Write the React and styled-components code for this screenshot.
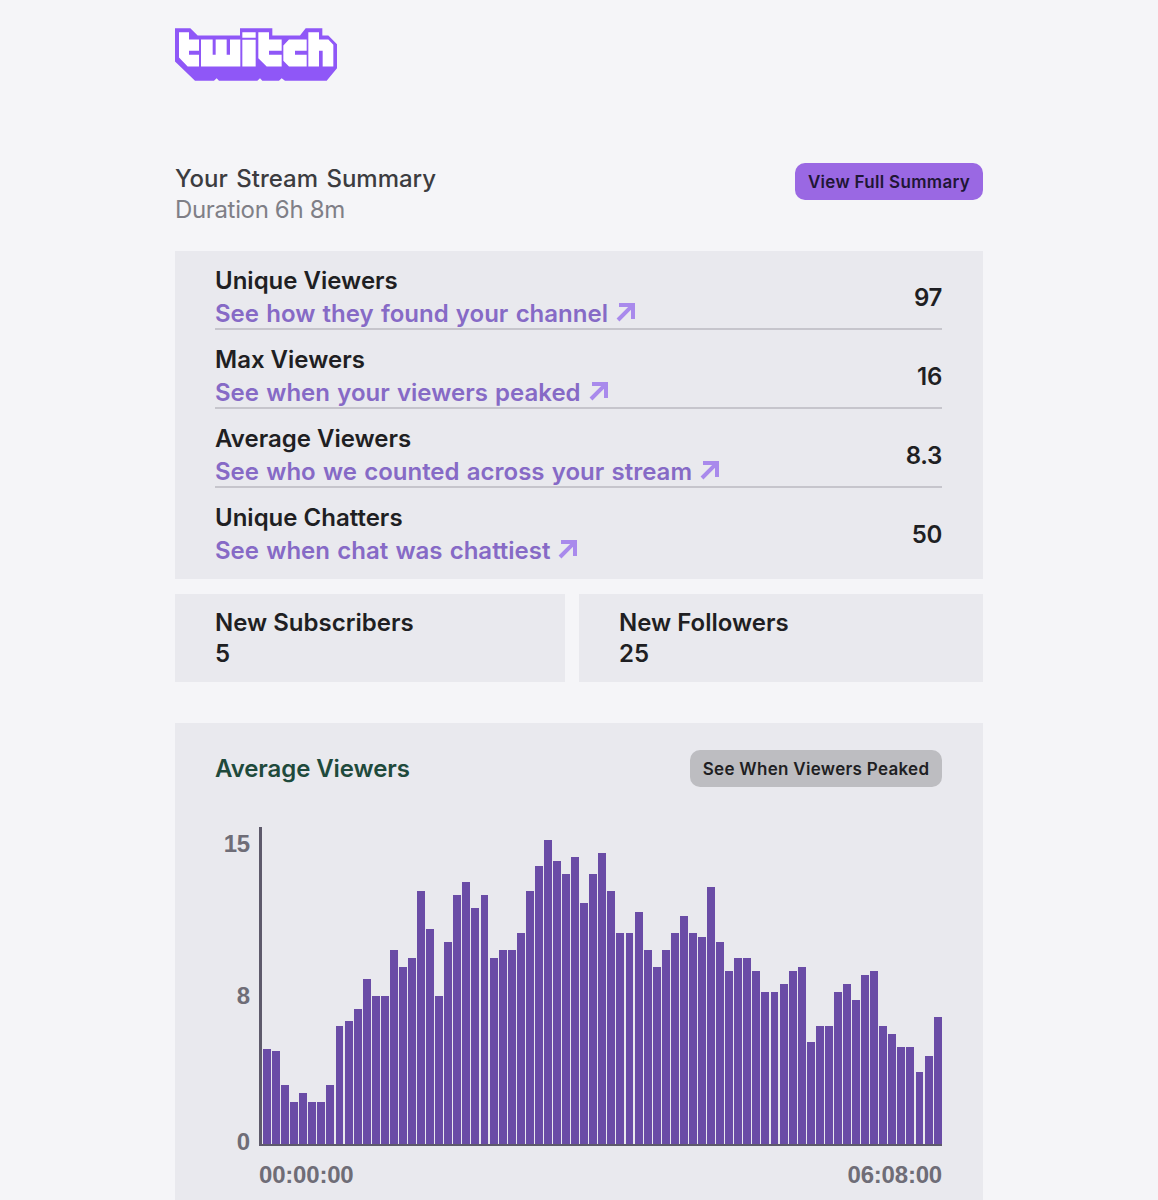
import React from "react";
import styled, { createGlobalStyle } from "styled-components";

const GlobalStyle = createGlobalStyle`
  html, body {
    margin: 0;
    padding: 0;
    background: #f5f5f8;
    font-family: Inter, "Liberation Sans", sans-serif;
  }
`;

const stats = [
  { title: "Unique Viewers", link: "See how they found your channel", value: "97" },
  { title: "Max Viewers", link: "See when your viewers peaked", value: "16" },
  { title: "Average Viewers", link: "See who we counted across your stream", value: "8.3" },
  { title: "Unique Chatters", link: "See when chat was chattiest", value: "50" },
];

const bars = [
  95.3, 93, 59.3, 42.3, 50.7, 42.3, 42.3, 59.3, 118, 122.7, 135, 164.7, 147.7, 147.7, 194, 177.3,
  186, 253.3, 215, 147.7, 202.3, 249, 261.7, 236, 249, 186, 194, 194, 210.7, 253.3, 278.3, 304,
  282.7, 270.3, 286.7, 240.7, 270.3, 291.3, 253.3, 210.7, 210.7, 232, 194, 177.3, 194, 210.7, 228,
  210.7, 206.7, 257.3, 202.3, 173, 186, 186, 173, 151.7, 151.7, 160.3, 173, 177.3, 101.7, 118, 118,
  151.7, 160.3, 143.7, 168.7, 173, 118, 109.7, 97.3, 97.3, 71.7, 88.3, 126.7,
];

const Page = styled.div`
  height: 1200px;
  overflow: hidden;
  box-sizing: border-box;
  width: 808px;
  margin-left: 175px;
  padding-top: 27px;
`;

const LogoMark = styled.svg`
  display: block;
  width: 162px;
  height: 55px;
`;

const Header = styled.header`
  display: flex;
  justify-content: space-between;
  align-items: flex-start;
  margin-top: 81px;
  height: 88px;
`;

const Heading = styled.h1`
  margin: 0;
  font-size: 24px;
  line-height: 31px;
  font-weight: 500;
  word-spacing: 2px;
  color: #3c3c40;
`;

const Duration = styled.p`
  margin: 0;
  font-size: 24px;
  line-height: 31px;
  font-weight: 400;
  letter-spacing: -0.35px;
  color: #7f7f87;
`;

const Button = styled.a`
  display: flex;
  align-items: center;
  justify-content: center;
  box-sizing: border-box;
  height: 37px;
  width: ${(p) => p.$width}px;
  border-radius: 10px;
  background: ${(p) => (p.$muted ? "#bdbdc1" : "#9a68e3")};
  color: ${(p) => (p.$muted ? "#1f1f23" : "#1f1635")};
  font-size: 17px;
  font-weight: 600;
  letter-spacing: 0.3px;
`;

const Panel = styled.section`
  background: #e9e9ee;
  box-sizing: border-box;
  padding: 0 41px 0 40px;
`;

const StatList = styled(Panel)`
  height: 328px;
`;

const StatRow = styled.div`
  display: flex;
  justify-content: space-between;
  align-items: center;
  box-sizing: border-box;
  height: 79px;
  padding-top: 15px;
  border-bottom: 2px solid ${(p) => (p.$last ? "transparent" : "#c6c5cc")};
`;

const StatText = styled.div`
  display: flex;
  flex-direction: column;
  gap: 2px;
`;

const StatTitle = styled.div`
  font-size: 24px;
  line-height: 31px;
  font-weight: 600;
  color: #1f1f23;
`;

const StatLink = styled.a`
  display: flex;
  align-items: center;
  gap: 8px;
  font-size: 24px;
  line-height: 31px;
  font-weight: 600;
  word-spacing: 1.2px;
  color: #866ac6;
`;

const Arrow = styled.svg`
  width: 19px;
  height: 19px;
  margin-top: -2px;
`;

const StatValue = styled.div`
  font-size: 24px;
  font-weight: 600;
  letter-spacing: -0.3px;
  color: #1f1f23;
`;

const Split = styled.div`
  display: grid;
  grid-template-columns: 390px 404px;
  gap: 14px;
  margin-top: 15px;
`;

const SmallCard = styled(Panel)`
  height: 88px;
  padding-top: 13px;
`;

const ChartPanel = styled(Panel)`
  margin-top: 41px;
  height: 600px;
  padding-top: 27px;
`;

const ChartHead = styled.div`
  display: flex;
  justify-content: space-between;
  align-items: center;
  height: 37px;
`;

const ChartTitle = styled.h2`
  margin: 0;
  font-size: 24px;
  font-weight: 600;
  letter-spacing: -0.1px;
  color: #1f4a3c;
`;

const ChartBody = styled.div`
  display: flex;
  margin: 40px 0 0 -40px;
`;

const YAxis = styled.div`
  display: flex;
  flex-direction: column;
  justify-content: space-between;
  align-items: flex-end;
  width: 75px;
  height: 329px;
  padding-top: 1px;
`;

const AxisLabel = styled.span`
  margin-top: ${(p) => p.$nudge || 0}px;
  font-family: "Liberation Sans", Arial, sans-serif;
  font-size: 24px;
  line-height: 31px;
  font-weight: 700;
  letter-spacing: -0.2px;
  color: #6f6d77;
`;

const Plot = styled.div`
  flex: 1;
  margin-left: 9px;
`;

const Bars = styled.div`
  display: flex;
  align-items: flex-end;
  gap: 1.08px;
  box-sizing: border-box;
  height: 319px;
  padding-left: 1px;
  border-left: 3px solid #5e5a6b;
  border-bottom: 2px solid #5e5a6b;
`;

const Bar = styled.div`
  flex: 1;
  background: #6a4ca6;
`;

const XAxis = styled.div`
  display: flex;
  justify-content: space-between;
  margin-top: 13px;
`;

const Logo = () => (
  <LogoMark viewBox="30 38 486 162" aria-label="Twitch">
    <path
      fill="#8f57f7"
      d="M30 40H76L98 62H225V40H322V62H405L422 40H472V62H490L516 88V160L485 198H360L350 190L342 198H292L285 190L277 198H162L155 190L147 198H90L30 140Z"
    />
    <path
      fill="#fff"
      d="M42 52H72V74H102V108H72V120H102V155H68L42 128Z
         M108 74H143V120H152V74H185V120H195V74H226V155H108Z
         M232 52H272V69H232Z
         M232 75H272V155H232Z
         M280 52H312V74H350V108H312V120H350V155H305L280 130Z
         M372 74H425V108H390V120H425V155H372L355 138V92Z
         M430 52H462V74H490L505 90V155H473V108H462V155H430Z"
    />
  </LogoMark>
);

const LinkArrow = () => (
  <Arrow viewBox="0 0 19 19">
    <path fill="none" stroke="#a98aec" strokeWidth="4" d="M3 2H17V16M16.6 2.4L2 17" />
  </Arrow>
);

const App = () => {
  return (
    <Page>
      <GlobalStyle />
      <Logo />
      <Header>
        <div>
          <Heading>Your Stream Summary</Heading>
          <Duration>Duration 6h 8m</Duration>
        </div>
        <Button $width={188}>View Full Summary</Button>
      </Header>

      <StatList>
        {stats.map((stat, index) => (
          <StatRow key={stat.title} $last={index === stats.length - 1}>
            <StatText>
              <StatTitle>{stat.title}</StatTitle>
              <StatLink>
                {stat.link} <LinkArrow />
              </StatLink>
            </StatText>
            <StatValue>{stat.value}</StatValue>
          </StatRow>
        ))}
      </StatList>

      <Split>
        <SmallCard>
          <StatTitle>New Subscribers</StatTitle>
          <StatTitle>5</StatTitle>
        </SmallCard>
        <SmallCard>
          <StatTitle>New Followers</StatTitle>
          <StatTitle>25</StatTitle>
        </SmallCard>
      </Split>

      <ChartPanel>
        <ChartHead>
          <ChartTitle>Average Viewers</ChartTitle>
          <Button $width={252} $muted>
            See When Viewers Peaked
          </Button>
        </ChartHead>
        <ChartBody>
          <YAxis>
            <AxisLabel>15</AxisLabel>
            <AxisLabel $nudge={6}>8</AxisLabel>
            <AxisLabel>0</AxisLabel>
          </YAxis>
          <Plot>
            <Bars>
              {bars.map((height, index) => (
                <Bar key={index} style={{ height }} />
              ))}
            </Bars>
            <XAxis>
              <AxisLabel>00:00:00</AxisLabel>
              <AxisLabel>06:08:00</AxisLabel>
            </XAxis>
          </Plot>
        </ChartBody>
      </ChartPanel>
    </Page>
  );
};

export default App;
